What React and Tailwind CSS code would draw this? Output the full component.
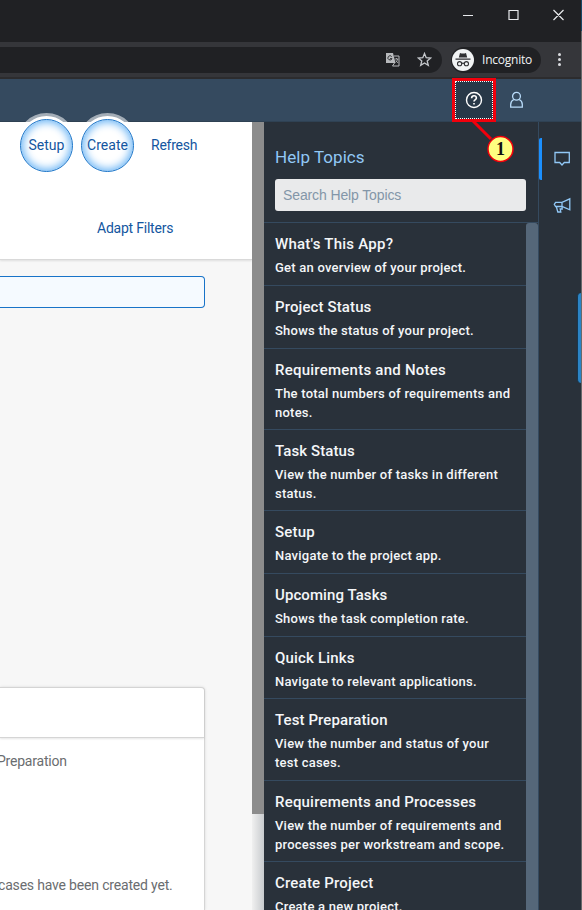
import React from "react";

const topics = [
  { t: "What's This App?", ts: "tracking-[0.24px]", d: ["Get an overview of your project."], h: "h-[63px]" },
  { t: "Project Status", ts: "tracking-[0.12px]", d: ["Shows the status of your project."], h: "h-[63px]" },
  { t: "Requirements and Notes", ts: "tracking-[0.24px]", d: ["The total numbers of requirements and", "notes."], h: "h-[81px]" },
  { t: "Task Status", ts: "tracking-[0.1px]", d: ["View the number of tasks in different", "status."], h: "h-[81px]" },
  { t: "Setup", ts: "tracking-[0.2px]", d: ["Navigate to the project app."], h: "h-[63px]" },
  { t: "Upcoming Tasks", ts: "tracking-[0.08px]", d: ["Shows the task completion rate."], h: "h-[63px]" },
  { t: "Quick Links", ts: "tracking-[0.18px]", d: ["Navigate to relevant applications."], h: "h-[62px]" },
  { t: "Test Preparation", ts: "tracking-[0.1px]", d: ["View the number and status of your", "test cases."], h: "h-[82px]" },
  { t: "Requirements and Processes", ts: "tracking-[0.2px]", d: ["View the number of requirements and", "processes per workstream and scope."], h: "h-[81px]" },
  { t: "Create Project", ts: "tracking-[0.2px]", d: ["Create a new project."], h: "h-[63px]" },
];

function Topic({ item }) {
  return (
    <li className={`${item.h} shrink-0 border-b border-[#354a5f] pl-[11px] pt-[11px]`}>
      <h3 className={`text-[15px] leading-5 font-medium whitespace-nowrap text-[#f4f6f8] ${item.ts}`}>{item.t}</h3>
      <div className="mt-[5px] text-[13px] leading-[18.5px] font-medium tracking-[0.23px] text-[#f4f6f8]">
        {item.d.map((line) => (
          <p key={line} className="whitespace-nowrap">{line}</p>
        ))}
      </div>
    </li>
  );
}

function Browser() {
  return (
    <>
      <div className="flex h-[42px] items-start justify-end bg-[#202124] text-[#e8eaed]">
        <svg className="mr-[14px] mt-[5px]" width="105" height="20" viewBox="0 0 105 20" fill="none" stroke="currentColor" strokeWidth="1.2">
          <path d="M0 10.5h10M46 5.5h9v9h-9zM90.5 5l10 10M100.5 5l-10 10" />
        </svg>
      </div>
      <div className="flex h-[37px] items-center border-b-2 border-[#2c2c2e] bg-[#35363a]">
        <div className="flex h-[26px] w-[442px] items-center justify-end rounded-r-full bg-[#202124] pr-[10px]">
          <svg width="15" height="15" viewBox="0 0 15 15" fill="none">
            <path d="M1 1h7l2.5 10H1z" fill="#b8babd" />
            <path d="M9 4h5v10H7.5l2-3" stroke="#b8babd" />
            <path d="M6.7 4.6a2.1 2.1 0 1 0 .3 2H5" stroke="#202124" strokeWidth=".9" />
            <path d="M9.8 7h3.6M11.5 6v1M12.7 7c-.3 1.5-1 2.5-2 3.3M10.8 8.5l2.2 2.5" stroke="#b8babd" strokeWidth=".8" />
          </svg>
          <svg className="ml-[17px]" width="15" height="15" viewBox="0 0 15 15" fill="none" stroke="#c5c8cc" strokeWidth="1.3">
            <path d="M7.500 1.500l1.700 4.200 4.500.3-3.500 2.900 1.100 4.400-3.800-2.400-3.800 2.400 1.100-4.400L1.300 6l4.500-.3z" />
          </svg>
        </div>
        <div className="ml-[9px] flex h-[26px] w-[90px] items-center rounded-full bg-[#202124] pl-[1px]">
          <svg width="22" height="22" viewBox="0 0 22 22">
            <circle cx="11" cy="11" r="11" fill="#f1f3f4" />
            <path d="M6.8 8.600l1.200-4.600q3 1 6 0l1.200 4.600zM3.500 9.400h15v1.400h-15z" fill="#303134" />
            <g fill="none" stroke="#303134" strokeWidth="1.1"><circle cx="7.600" cy="14.700" r="2.100" /><circle cx="14.400" cy="14.700" r="2.100" /><path d="M9.700 14.500q1.300-.8 2.600 0" /></g>
          </svg>
          <span className="ml-[8px] text-[12px] leading-4 tracking-[-0.22px] text-[#f1f3f4] font-['Open_Sans',sans-serif]">Incognito</span>
        </div>
        <div className="ml-[17px] flex flex-col gap-[2px]">
          <i className="size-[3px] rounded-full bg-[#dadce0]" />
          <i className="size-[3px] rounded-full bg-[#dadce0]" />
          <i className="size-[3px] rounded-full bg-[#dadce0]" />
        </div>
      </div>
    </>
  );
}

function ShellBar() {
  return (
    <div className="flex h-[43px] items-center border-b border-[#2f4254] bg-[#354a5f]">
      <button className="ml-[452px] flex h-[44px] w-[44px] shrink-0 items-center justify-center border-[3px] border-[#f2000c] bg-[#283848]">
        <span className="flex h-[38px] w-[38px] shrink-0 items-center justify-center border border-dotted border-white">
          <svg className="-ml-px" width="18" height="18" viewBox="0 0 18 18" fill="none" stroke="#fff" strokeWidth="1.4">
            <circle cx="9" cy="9" r="7.5" />
            <path d="M6.600 7.300q.1-2.500 2.400-2.500t2.400 2.200q0 1-1.300 1.900-1.100.8-1.100 1.700M9 12v1.600" strokeWidth="1.6" />
          </svg>
        </span>
      </button>
      <svg className="ml-[13px]" width="15" height="18" viewBox="0 0 15 18" fill="none" stroke="#b9dcfa" strokeWidth="1.3">
        <circle cx="7.5" cy="5.300" r="3.900" />
        <path d="M4.800 8.500Q1.700 10.200 1.700 13.500v2.700h11.600v-2.700q0-3.300-3.100-5" />
      </svg>
    </div>
  );
}

function GlowButton({ children, className }) {
  return (
    <div className={`relative h-[53px] w-[53px] shrink-0 ${className}`}>
      <div className="absolute -left-[3px] -top-[6px] h-[9px] w-[59px] overflow-hidden">
        <div className="h-[59px] w-[59px] rounded-full border-[3px] border-[#a3adb7] bg-white" />
      </div>
      <div className="relative flex h-[53px] w-[53px] items-center justify-center rounded-full border-[1.5px] border-[#1873c8] bg-white text-[14px] text-[#1456a0] shadow-[inset_0_0_9px_2px_#69b4f5]">{children}</div>
    </div>
  );
}

function Page() {
  return (
    <main className="flex w-[252px] shrink-0 flex-col bg-[#f7f7f7]">
      <div className="h-[138px] shrink-0 border-b border-[#d9d9d9] bg-white text-[14px] text-[#1456a0] shadow-[0_1px_2px_rgba(0,0,0,0.1)]">
        <div className="-mt-[3px] flex items-center">
          <GlowButton className="ml-[20px]">Setup</GlowButton>
          <GlowButton className="ml-[8px]">Create</GlowButton>
          <span className="ml-[17px] tracking-[-0.25px]">Refresh</span>
        </div>
        <div className="mt-[46px] pl-[97px] leading-5 tracking-[-0.22px] whitespace-nowrap">Adapt Filters</div>
      </div>
      <div className="mt-[16px] h-[32px] w-[205px] shrink-0 rounded-r-[4px] border border-l-0 border-[#1873c8] bg-[#f5faff]" />
      <section className="mt-[379px] w-[205px] flex-1 rounded-tr-[4px] border-r border-t border-[#d5d5d5] bg-white text-[14px] text-[#6a6d70] shadow-[0_0_3px_rgba(0,0,0,0.12)]">
        <div className="h-[50px] border-b border-[#d5d5d5] shadow-[0_1px_2px_rgba(0,0,0,0.1)]" />
        <p className="-ml-[3px] mt-[13px] leading-5 tracking-[-0.22px] whitespace-nowrap">Preparation</p>
        <p className="-ml-[2px] mt-[104px] leading-5 tracking-[-0.18px] whitespace-nowrap">cases have been created yet.</p>
      </section>
    </main>
  );
}

export default function App() {
  return (
    <div className="relative flex h-[910px] w-[582px] flex-col overflow-hidden bg-[#29313a] font-['Roboto',sans-serif]">
      <Browser />
      <ShellBar />
      <div className="flex min-h-0 flex-1">
        <Page />
        <div className="flex w-[12px] shrink-0 flex-col bg-gradient-to-r from-[#f0f0f0] to-[#c8cbce]">
          <div className="h-[692px] bg-[#8c8c8c]" />
        </div>
        <aside className="flex w-[275px] shrink-0 flex-col border-r border-[#354a5f]">
          <div className="h-[101px] shrink-0 border-b border-[#354a5f] pl-[11px] pt-[23px]">
            <h2 className="text-[17px] leading-6 tracking-[0.05px] text-[#91c8f6]">Help Topics</h2>
            <div className="mt-[10px] flex h-[32px] w-[251px] items-center rounded-[3px] bg-[#e9eaeb] pl-2 text-[14px] tracking-[-0.12px] text-[#8396a8] font-['Liberation_Sans',sans-serif]">Search Help Topics</div>
          </div>
          <div className="flex min-h-0 flex-1">
            <ul className="flex w-[262px] flex-col overflow-hidden">
              {topics.map((item) => <Topic key={item.t} item={item} />)}
            </ul>
            <div className="w-[12px] rounded-t-[3px] bg-[#556779]" />
          </div>
        </aside>
        <nav className="flex flex-1 flex-col">
          <div className="mt-[16px] flex h-[42px] items-center rounded-l-[2px] bg-[#1b90ff] pl-[3px]">
            <div className="flex h-full flex-1 items-center bg-[#29313a]">
              <svg className="ml-[11px]" width="18" height="16" viewBox="0 0 18 16" fill="none" stroke="#91c8f6" strokeWidth="1.3">
                <path d="M2 1.500h14.300v10h-5L9 14l-2.300-2.500H2z" />
              </svg>
            </div>
          </div>
          <svg className="ml-[14px] mt-[17px]" width="19" height="17" viewBox="0 0 19 17" fill="none" stroke="#91c8f6" strokeWidth="1.3">
            <path d="M16.800 1.800v11L9 9.500H2.600L1.300 7.300l1.300-2H9zM9 5.300v4.200M3.300 9.500l1.500 5.500h3l-.6-3h2L9 9.500" />
          </svg>
          <div className="mt-[79px] h-[90px] w-[5px] self-end rounded-l-[4px] border-l border-[#17374f] bg-[#2b84c6]" />
        </nav>
      </div>
      <div className="absolute right-0 top-0 h-[31px] w-px bg-[#174766]" />
      <div className="absolute right-0 top-[31px] h-[879px] w-px bg-[#68696b]" />
      <svg className="absolute left-[464px] top-[120px]" width="54" height="46" viewBox="0 0 54 46">
        <path d="M9 1l18 18" stroke="#f2000c" strokeWidth="3" />
        <circle cx="36.5" cy="29" r="12.5" fill="#ffff80" stroke="#f2000c" strokeWidth="1.5" />
        <text x="36.5" y="35" textAnchor="middle" fontSize="18" fontWeight="bold" fontFamily="Liberation Serif, serif" fill="#111">1</text>
      </svg>
    </div>
  );
}
